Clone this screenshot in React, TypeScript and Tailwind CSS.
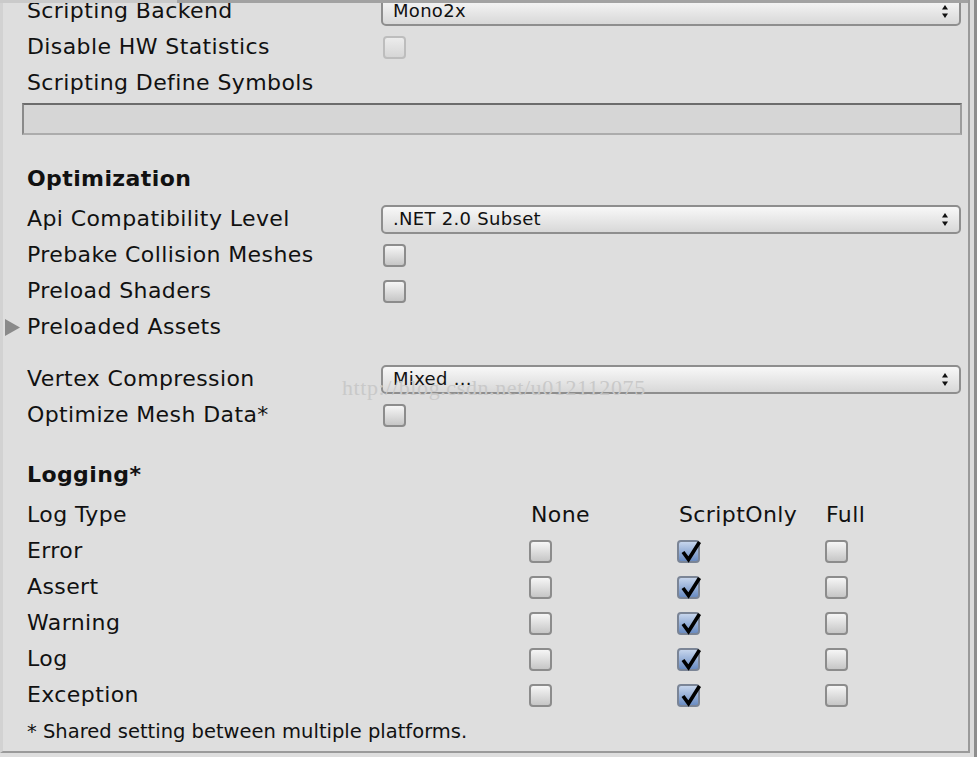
import React from 'react';

const labelCls = "shrink-0 text-[22px] tracking-[0.4px] text-[#111] leading-none whitespace-nowrap";

function Checkbox({ checked = false, disabled = false }: { checked?: boolean; disabled?: boolean }) {
    if (checked) {
        return (
            <div className="relative w-[23px] h-[23px] rounded-[4px] border-2 border-[#7b8596] bg-linear-to-b from-[#c6d5ec] to-[#6a8cc2]">
                <svg className="absolute -top-[4px] left-[1px] overflow-visible" width="22" height="26" viewBox="0 0 22 26">
                    <path d="M3 14 L8.5 21.5 L19.5 4" fill="none" stroke="#000" strokeWidth="3.6" />
                </svg>
            </div>
        );
    }
    if (disabled) {
        return <div className="w-[23px] h-[23px] rounded-[4px] border-2 border-[#bdbdbd] bg-linear-to-b from-[#ececec] to-[#d6d6d6]" />;
    }
    return <div className="w-[23px] h-[23px] rounded-[4px] border-2 border-[#8c8c8c] bg-linear-to-b from-[#f6f6f6] to-[#c6c6c6]" />;
}

function Dropdown({ value }: { value: string }) {
    return (
        <div className="shrink-0 w-[580px] h-[29px] flex items-center justify-between rounded-[5px] border-2 border-[#8e8e8e] bg-linear-to-b from-[#f8f8f8] to-[#d8d8d8] pl-[10px] pr-[11px]">
            <span className="text-[18px] tracking-[0.3px] text-[#111] leading-none whitespace-nowrap">{value}</span>
            <svg width="6" height="13" viewBox="0 0 6 13">
                <path d="M3 0 L6 4.5 L0 4.5 Z" fill="#111" />
                <path d="M0 8.5 L6 8.5 L3 13 Z" fill="#111" />
            </svg>
        </div>
    );
}

function Row({ label, children, muted }: { label: string; children?: React.ReactNode; muted?: boolean }) {
    return (
        <div className="h-[36px] flex items-center pl-[27px]">
            <div className={`w-[354px] ${labelCls} ${muted ? 'text-[#7c7c7c]' : ''}`}>{label}</div>
            {children}
        </div>
    );
}

const logRows = ['Error', 'Assert', 'Warning', 'Log', 'Exception'];

export default function App() {
    return (
        <div className="relative w-[977px] h-[757px] overflow-hidden bg-[#dedede] flex font-['DejaVu_Sans',sans-serif]">
            {/* inspector panel */}
            <div className="shrink-0 w-[970px] h-[753px] border-l-[3px] border-l-[#d2d2d2] border-r-2 border-b-2 border-[#9a9a9a] flex flex-col">
                <div className="-mt-[7px] -ml-[3px] flex flex-col">
                    <Row label="Scripting Backend">
                        <Dropdown value="Mono2x" />
                    </Row>
                    <Row label="Disable HW Statistics" muted>
                        <div className="ml-[2px]"><Checkbox disabled /></div>
                    </Row>
                    <Row label="Scripting Define Symbols" />
                    <div className="h-[2px]" />
                    <div className="ml-[22px] w-[940px] h-[32px] border-2 border-t-[#6c6c6c] border-l-[#8a8a8a] border-r-[#9c9c9c] border-b-[#acacac] bg-[#d6d6d6]" />

                    <div className="h-[26px]" />
                    <div className="h-[36px] flex items-center pl-[27px]">
                        <span className="text-[22px] tracking-[0.4px] font-bold text-[#111] leading-none">Optimization</span>
                    </div>
                    <div className="h-[4px]" />
                    <Row label="Api Compatibility Level">
                        <Dropdown value=".NET 2.0 Subset" />
                    </Row>
                    <Row label="Prebake Collision Meshes">
                        <div className="ml-[2px]"><Checkbox /></div>
                    </Row>
                    <Row label="Preload Shaders">
                        <div className="ml-[2px]"><Checkbox /></div>
                    </Row>
                    <div className="h-[36px] flex items-center pl-[5px]">
                        <svg width="15" height="17" viewBox="0 0 15 17" className="mr-[7px]">
                            <path d="M0 0 L15 8.5 L0 17 Z" fill="#8a8a8a" />
                        </svg>
                        <span className={labelCls}>Preloaded Assets</span>
                    </div>

                    <div className="h-[16px]" />
                    <Row label="Vertex Compression">
                        <Dropdown value="Mixed ..." />
                    </Row>
                    <Row label="Optimize Mesh Data*">
                        <div className="ml-[2px]"><Checkbox /></div>
                    </Row>

                    <div className="h-[24px]" />
                    <div className="h-[36px] flex items-center pl-[27px]">
                        <span className="text-[22px] tracking-[0.4px] font-bold text-[#111] leading-none">Logging*</span>
                    </div>
                    <div className="h-[4px]" />
                    <div className="h-[36px] flex items-center pl-[27px]">
                        <div className={`w-[502px] ${labelCls}`}>Log Type</div>
                        <div className={`w-[148px] pl-[2px] ${labelCls}`}>None</div>
                        <div className={`w-[148px] pl-[2px] ${labelCls}`}>ScriptOnly</div>
                        <div className={`w-[140px] pl-[1px] ${labelCls}`}>Full</div>
                    </div>
                    {logRows.map((r) => (
                        <div key={r} className="h-[36px] flex items-center pl-[27px]">
                            <div className={`w-[502px] ${labelCls}`}>{r}</div>
                            <div className="shrink-0 w-[148px]"><Checkbox /></div>
                            <div className="shrink-0 w-[148px]"><Checkbox checked /></div>
                            <div className="shrink-0 w-[140px]"><Checkbox /></div>
                        </div>
                    ))}
                    <div className="h-[1px]" />
                    <div className="h-[36px] flex items-center pl-[27px]">
                        <span className="text-[19.5px] text-[#111] leading-none whitespace-nowrap">* Shared setting between multiple platforms.</span>
                    </div>
                </div>
            </div>
            {/* right scroll gutter */}
            <div className="shrink-0 w-[4px] h-full bg-[#dcdcdc]" />
            <div className="shrink-0 w-[3px] h-full bg-[#8e8e8e]" />

            {/* top edge of the section above */}
            <div className="absolute top-0 left-0 w-[968px] h-[3px] flex">
                <div className="w-[177px] h-full bg-[#cacaca]" />
                <div className="flex-1 h-full bg-[#a2a2a2]" />
            </div>

            {/* watermark */}
            <div className="absolute left-[342px] top-[377px] text-[22px] leading-none tracking-[0.6px] text-[#c9c9c9] font-['Liberation_Serif',serif] whitespace-nowrap">
                http://blog.csdn.net/u012112075
            </div>
        </div>
    );
}
